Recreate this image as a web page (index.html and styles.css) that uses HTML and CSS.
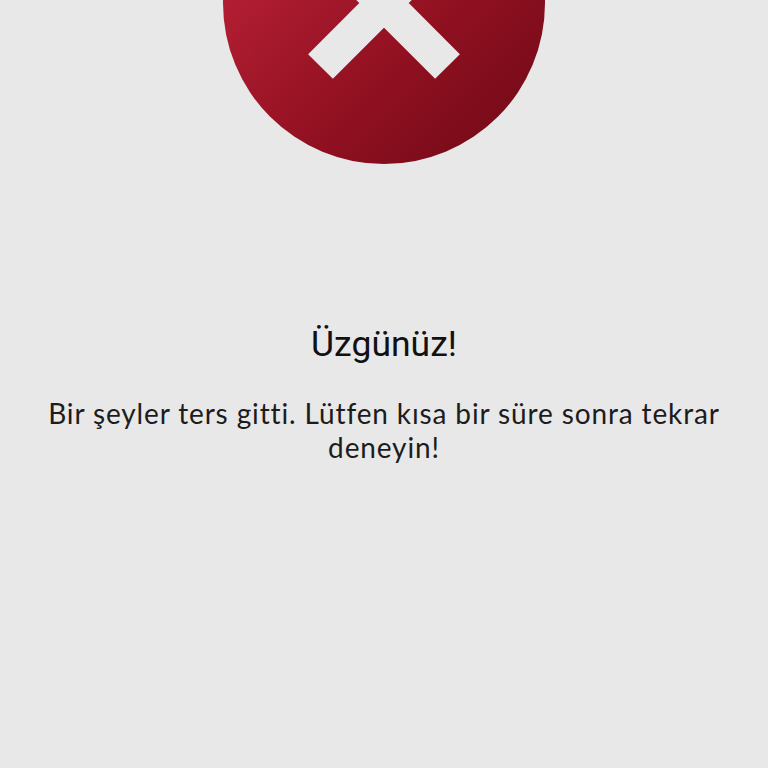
FILE: index.html
```html
<!DOCTYPE html>
<html lang="tr">
<head>
<meta charset="utf-8">
<title>Üzgünüz!</title>
<link rel="stylesheet" href="styles.css">
</head>
<body>
<main class="page">
  <svg class="badge" width="322" height="322" viewBox="0 0 322 322" aria-hidden="true">
    <defs>
      <linearGradient id="red" x1="0.1" y1="0.1" x2="0.95" y2="0.95">
        <stop offset="0" stop-color="#c0233a"/>
        <stop offset="0.62" stop-color="#8f1020"/>
        <stop offset="1" stop-color="#720a18"/>
      </linearGradient>
    </defs>
    <circle cx="161" cy="161" r="161" fill="url(#red)"/>
    <path d="M97.5 97.5 224.5 224.5M224.5 97.5 97.5 224.5" stroke="#e8e8e8" stroke-width="35" fill="none"/>
  </svg>
  <h1 class="title">Üzgünüz!</h1>
  <p class="message">Bir şeyler ters gitti. Lütfen kısa bir süre sonra tekrar deneyin!</p>
</main>
</body>
</html>
```
FILE: styles.css
```css
html, body {
  margin: 0;
  height: 100%;
  background: #e8e8e8;
  overflow: hidden;
}

.page {
  display: flex;
  flex-direction: column;
  align-items: center;
  height: 768px;
}

.badge {
  display: block;
  flex: none;
  margin-top: -158px;
}

.title {
  margin: 158px 0 0;
  font: 400 35.5px/44px Roboto, sans-serif;
  color: #111;
}

.message {
  margin: 30px 0 0;
  width: 700px;
  text-align: center;
  font: 400 28px/34px Lato, sans-serif;
  letter-spacing: 0.87px;
  color: #1c1c1c;
}
```
